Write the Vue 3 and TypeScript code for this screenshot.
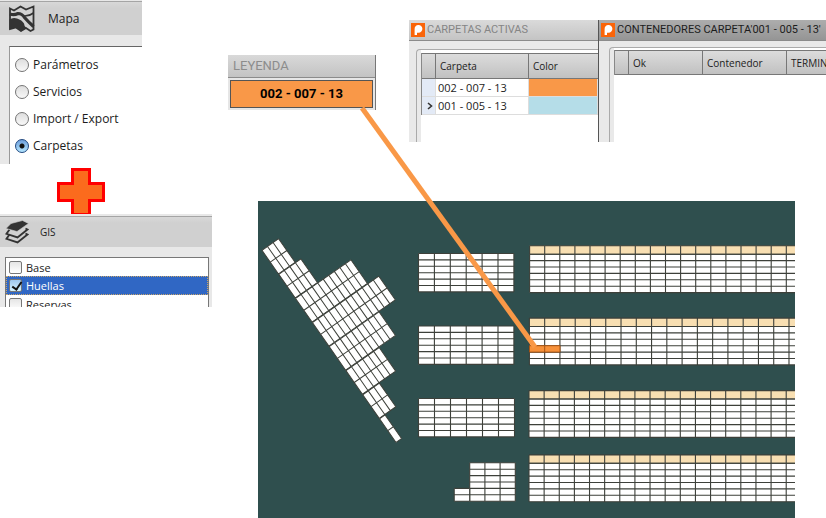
<script setup lang="ts">
import { ref } from 'vue'

interface Block {
  x: number
  y: number
  cols: number
  rows: number
  cellWidth: number
  cellHeight: number
}

const sections = ['Parámetros', 'Servicios', 'Import / Export', 'Carpetas']
const section = ref('Carpetas')

const layers = ref([
  { name: 'Base', visible: false },
  { name: 'Huellas', visible: true },
  { name: 'Reservas', visible: false },
])
const currentLayer = 'Huellas'

const folders = [
  { code: '002 - 007 - 13', tone: 'orange', current: false },
  { code: '001 - 005 - 13', tone: 'blue', current: true },
]

// Small yards in the middle of the terminal
const yards: Block[] = [
  { x: 418.5, y: 253.5, cols: 6, rows: 6, cellWidth: 15.9, cellHeight: 6.4 },
  { x: 418.5, y: 326, cols: 6, rows: 6, cellWidth: 15.9, cellHeight: 6.4 },
  { x: 418.5, y: 398.5, cols: 6, rows: 6, cellWidth: 16, cellHeight: 6.4 },
  { x: 469.7, y: 462.8, cols: 3, rows: 6, cellWidth: 15.2, cellHeight: 6.4 },
  { x: 454.2, y: 488.4, cols: 1, rows: 2, cellWidth: 15.5, cellHeight: 6.4 },
]

// Long yards, each topped by a sand-coloured row
const longYards: Block[] = [
  { x: 529.6, y: 254.2, cols: 18, rows: 6, cellWidth: 15.1, cellHeight: 6.4 },
  { x: 529.4, y: 326.5, cols: 18, rows: 6, cellWidth: 15.27, cellHeight: 6.4 },
  { x: 529, y: 399, cols: 18, rows: 6, cellWidth: 15.13, cellHeight: 6.4 },
  { x: 529, y: 463.3, cols: 18, rows: 6, cellWidth: 15.13, cellHeight: 6.4 },
]

// Slanted yard: number of cells in each pair of rows
const slanted: Block[] = [3, 4, 10, 12, 9, 6, 3, 1].map((cols, i) => ({
  x: 0,
  y: i * 29.35,
  cols,
  rows: 2,
  cellWidth: 6.75,
  cellHeight: 14.4,
}))

function outline(b: Block): string {
  return `M${b.x} ${b.y}h${b.cols * b.cellWidth}v${b.rows * b.cellHeight}h${-b.cols * b.cellWidth}z`
}

function gridLines(b: Block): string {
  let d = ''
  for (let c = 0; c <= b.cols; c++) d += `M${b.x + c * b.cellWidth} ${b.y}v${b.rows * b.cellHeight}`
  for (let r = 0; r <= b.rows; r++) d += `M${b.x} ${b.y + r * b.cellHeight}h${b.cols * b.cellWidth}`
  return d
}

function topRow(b: Block): Block {
  return { ...b, y: b.y - 8.4, rows: 1, cellHeight: 8.4 }
}
</script>

<template>
  <main class="page">
    <aside class="side">
      <section class="panel mapa">
        <header class="panel-head">
          <svg class="icon-map" viewBox="0 0 28 28" aria-hidden="true">
            <path d="M2 3.500 6 5.500 12.500 1.500 18 4.500 25.500 1.500V24.500L22.500 26 18 23 13 26 8 22.500 2 24z" fill="#d1d1d1" stroke="#333" stroke-width="1.800" />
            <path d="M1.500 14.500Q5 12 9 13.500 14 15 16 18.500 16 21 18.500 23L13 26.500 8 22.500 1.500 24z" fill="#333" />
            <path d="M2 9Q6 10.500 10 8.500 14 8.500 16.500 12.500 20 16.500 25.500 21.500" fill="none" stroke="#333" stroke-width="3.200" />
            <path d="M15.500 11Q21 11.500 25.500 8" fill="none" stroke="#333" stroke-width="1.600" />
          </svg>
          <h2>Mapa</h2>
        </header>
        <div class="options">
          <label v-for="name in sections" :key="name">
            <input v-model="section" type="radio" name="section" :value="name" />
            <span>{{ name }}</span>
          </label>
        </div>
      </section>

      <svg class="plus" viewBox="0 0 48 46" aria-hidden="true">
        <path d="M15.500 1.500h17v14h14v17h-14v14h-17v-14h-14v-17h14z" fill="#fb6b1d" stroke="#f00" stroke-width="3" />
      </svg>

      <section class="panel gis">
        <header class="panel-head">
          <svg class="icon-layers" viewBox="0 0 24 24" aria-hidden="true">
            <path d="M4.500 14.500 1.500 18.800 12.500 22.500 22.500 14.500 20.500 13.500" fill="none" stroke="#333" stroke-width="1.900" />
            <path d="M4.500 9.500 1.500 13.800 12.500 17.500 22.500 9.500 20.500 8.500" fill="#d1d1d1" stroke="#333" stroke-width="1.900" />
            <path d="M6 3.500 17.500 0.500 23.500 3.500 12 11.500 1 8.500z" fill="#333" stroke="#d1d1d1" stroke-width="0.600" />
          </svg>
          <h2>GIS</h2>
        </header>
        <div class="layers">
          <label v-for="layer in layers" :key="layer.name" :class="{ current: layer.name === currentLayer }">
            <input v-model="layer.visible" type="checkbox" />
            <span>{{ layer.name }}</span>
          </label>
        </div>
      </section>
    </aside>

    <div class="work">
      <div class="top">
        <section class="legend">
          <h2>LEYENDA</h2>
          <p>002 - 007 - 13</p>
        </section>

        <div class="windows">
          <section class="window folders">
            <header>
              <svg class="logo" viewBox="0 0 14 14" aria-hidden="true">
                <rect width="14" height="14" fill="#fa6408" />
                <path d="M3.600 12V6.200A3.900 3.900 0 1 1 7.500 9.800H6V12z" fill="#fff" />
              </svg>
              <h2>CARPETAS ACTIVAS</h2>
            </header>
            <div class="frame">
              <table>
                <colgroup><col class="mark" /><col class="code" /><col /></colgroup>
                <thead>
                  <tr><th></th><th>Carpeta</th><th>Color</th></tr>
                </thead>
                <tbody>
                  <tr v-for="folder in folders" :key="folder.code">
                    <td class="marker">
                      <svg v-if="folder.current" viewBox="0 0 6 8" aria-hidden="true">
                        <path d="M1 1 4.500 4 1 7" fill="none" stroke="#333" stroke-width="1.600" />
                      </svg>
                    </td>
                    <td>{{ folder.code }}</td>
                    <td :class="folder.tone"></td>
                  </tr>
                </tbody>
              </table>
            </div>
          </section>

          <section class="window containers">
            <header>
              <svg class="logo" viewBox="0 0 14 14" aria-hidden="true">
                <rect width="14" height="14" fill="#fa6408" />
                <path d="M3.600 12V6.200A3.900 3.900 0 1 1 7.500 9.800H6V12z" fill="#fff" />
              </svg>
              <h2>CONTENEDORES CARPETA'001 - 005 - 13'</h2>
            </header>
            <div class="frame">
              <table>
                <colgroup><col class="mark" /><col class="ok" /><col class="container" /><col /></colgroup>
                <thead>
                  <tr><th></th><th>Ok</th><th>Contenedor</th><th>TERMINAL</th></tr>
                </thead>
              </table>
            </div>
          </section>
        </div>
      </div>

      <svg class="terminal" viewBox="258 201 537 317" role="img" aria-label="Terminal">
        <rect x="258" y="201" width="537" height="317" fill="#2f4f4e" />
        <g class="slanted" transform="translate(262 250.300) rotate(-34.900)">
          <g v-for="(b, i) in slanted" :key="i">
            <path :d="outline(b)" class="cells" />
            <path :d="gridLines(b)" class="lines" />
          </g>
        </g>
        <g v-for="(b, i) in yards" :key="`y${i}`">
          <path :d="outline(b)" class="cells" />
          <path :d="gridLines(b)" class="lines" />
        </g>
        <g v-for="(b, i) in longYards" :key="`l${i}`">
          <path :d="outline(b)" class="cells" />
          <path :d="outline(topRow(b))" class="sand" />
          <path :d="gridLines(b)" class="lines" />
          <path :d="gridLines(topRow(b))" class="lines" />
        </g>
        <path d="M529.500 345.700h30.500v6.400h-30.500zM544.700 345.700v6.400" fill="#f7913a" stroke="#a85412" />
      </svg>

      <svg class="connector" viewBox="0 0 180 246" aria-hidden="true">
        <path d="M3 3 176 242" stroke="#f99847" stroke-width="5" />
      </svg>
    </div>
  </main>
</template>

<style>
body {
  margin: 0;
  background: #fff;
}
</style>

<style scoped>
* {
  box-sizing: border-box;
}

.page {
  display: grid;
  grid-template-columns: 212px minmax(0, 1fr);
  overflow: hidden;
  color: #1c1c1c;
  font-family: 'Open Sans', 'Noto Sans', sans-serif;
  font-size: 11px;
}

h2,
p {
  margin: 0;
  font-weight: 400;
}

svg {
  display: block;
  flex: none;
}

.side {
  display: flex;
  flex-direction: column;
  align-items: flex-start;
}

.panel {
  background: #e8e8e8;
  overflow: hidden;
}

.panel-head {
  display: flex;
  align-items: center;
  background: linear-gradient(#d8d8d8, #d0d0d0 6px);
  border-top: 1px solid #a5a5a5;
}

.panel-head h2 {
  font-size: 12px;
}

.mapa {
  width: 142px;
  height: 164px;
  padding-top: 1px;
}

.mapa .panel-head {
  height: 34px;
  padding-left: 8px;
  gap: 12px;
}

.icon-map {
  width: 28px;
  height: 28px;
}

.options {
  display: flex;
  flex-direction: column;
  height: 120px;
  margin: 11px 0 0 9px;
  padding: 4px 0 0 5px;
  background: #fff;
  border-top: 1px solid #666;
  border-left: 1px solid #999;
  font-size: 12px;
}

.options label {
  display: flex;
  align-items: center;
  gap: 4px;
  height: 27px;
  flex: none;
}

input {
  appearance: none;
  flex: none;
  margin: 0;
}

.options input {
  width: 14px;
  height: 14px;
  border: 1px solid #757575;
  border-radius: 50%;
  background: linear-gradient(#dedede, #f8f8f8);
}

.options input:checked {
  border-color: #1f477f;
  background: radial-gradient(circle, #111 2px, transparent 3px), linear-gradient(#6d9fdc, #b4e6ff);
}

.plus {
  width: 48px;
  height: 46px;
  margin: 4px 0 0 57px;
}

.gis {
  width: 212px;
  height: 93px;
  padding-top: 2px;
}

.gis .panel-head {
  height: 31px;
  padding: 0 0 0 5px;
  gap: 11px;
}

.gis .panel-head h2 {
  font-size: 10px;
}

.icon-layers {
  width: 24px;
  height: 24px;
}

.layers {
  margin: 10px 3px 0 5px;
  background: #fff;
  border: 1px solid #777;
}

.layers label {
  display: flex;
  align-items: center;
  gap: 4px;
  height: 18px;
  padding-left: 3px;
}

.layers .current {
  height: 19px;
  color: #fff;
  background: #3067c4;
  outline: 1px dotted #c9a56a;
  outline-offset: -1px;
}

.layers input {
  width: 13px;
  height: 13px;
  border: 1px solid #777;
  border-radius: 2px;
  background: linear-gradient(#e5e5e5, #fff);
}

.layers input:checked {
  background: linear-gradient(#9fc7ee, #d5f2ff);
}

.layers input:checked::before {
  content: '';
  display: block;
  width: 4px;
  height: 8px;
  margin: 0 0 0 4px;
  border: solid #111;
  border-width: 0 2px 2px 0;
  rotate: 35deg;
}

.work {
  position: relative;
  min-width: 0;
  padding: 20px 0 0 16px;
}

.top {
  display: flex;
  align-items: flex-start;
  gap: 33px;
}

.legend {
  flex: none;
  width: 148px;
  margin-top: 35px;
  background: #e6e6e6;
  border-right: 1px solid #777;
}

.legend h2 {
  padding-left: 5px;
  color: #8c8c8c;
  background: linear-gradient(#d9d9d9, #c3c3c3);
  border-bottom: 1px solid #8b8b8b;
  font: 13px/22px Roboto, sans-serif;
}

.legend p {
  margin: 2px;
  border: 1px solid #555;
  background: #f99848;
  color: #000;
  font: 700 13px/26px Roboto, sans-serif;
  text-align: center;
}

.windows {
  display: flex;
  flex: 1;
  min-width: 0;
  height: 122px;
}

.window {
  display: flex;
  flex-direction: column;
  min-width: 0;
  overflow: hidden;
  background: #e9e9e9;
}

.window header {
  display: flex;
  flex: none;
  align-items: center;
  gap: 2px;
  height: 21px;
  padding-left: 2px;
  border-bottom: 1px solid #8b8b8b;
}

.window h2 {
  font: 11px/20px Roboto, sans-serif;
  white-space: nowrap;
}

.logo {
  width: 14px;
  height: 14px;
}

.folders {
  flex: 0 0 189px;
}

.folders header {
  color: #858585;
  background: linear-gradient(#dadada, #c4c4c4);
}

.containers {
  flex: 1;
  border-left: 1px solid #555;
}

.containers header {
  background: linear-gradient(#adadad, #959595);
}

.frame {
  flex: 1;
  margin: 8px 0 0 7px;
  padding: 3px 0 0 4px;
  border: 1px solid #aaa;
  border-width: 1px 0 0 1px;
  border-top-left-radius: 4px;
  background: linear-gradient(#e9e9e9, #e9e9e9) left / 4px 100% no-repeat, #fff;
}

.containers .frame {
  margin: 6px 0 0 10px;
  padding: 2px 0 0 4px;
}

table {
  width: 100%;
  table-layout: fixed;
  border-collapse: separate;
  border-spacing: 0;
  border-left: 1px solid #888;
}

.mark {
  width: 14px;
}

.code {
  width: 93px;
}

.ok {
  width: 74px;
}

.container {
  width: 84px;
}

th {
  height: 26px;
  padding: 0 0 0 4px;
  border: solid #777;
  border-width: 1px 1px 1px 0;
  background: linear-gradient(#dcdcdc, #c1c1c1);
  font-weight: 400;
  font-size: 10px;
  line-height: 14px;
  text-align: left;
  overflow: hidden;
  white-space: nowrap;
}

.containers th {
  height: 25px;
}

th:last-child {
  border-right: 0;
}

td {
  height: 18px;
  padding: 0 0 0 2px;
  border: solid #ddd;
  border-width: 0 1px 1px 0;
  font-size: 11px;
  line-height: 16px;
}

.marker {
  padding: 0 0 0 5px;
  background: #e3eaf6;
}

.marker svg {
  width: 6px;
  height: 8px;
}

.orange {
  background: #f99848;
}

.blue {
  background: #b5dde8;
}

.terminal {
  width: calc(100% - 61px);
  height: auto;
  margin: 59px 31px 0 30px;
}

.cells {
  fill: #fff;
}

.sand {
  fill: #f8dfb2;
}

.lines {
  fill: none;
  stroke: #3d403a;
  stroke-width: 1.1px;
}

.slanted .lines {
  stroke-width: 1px;
}

.connector {
  position: absolute;
  top: 105px;
  left: 147px;
  width: 180px;
  height: 246px;
}
</style>
